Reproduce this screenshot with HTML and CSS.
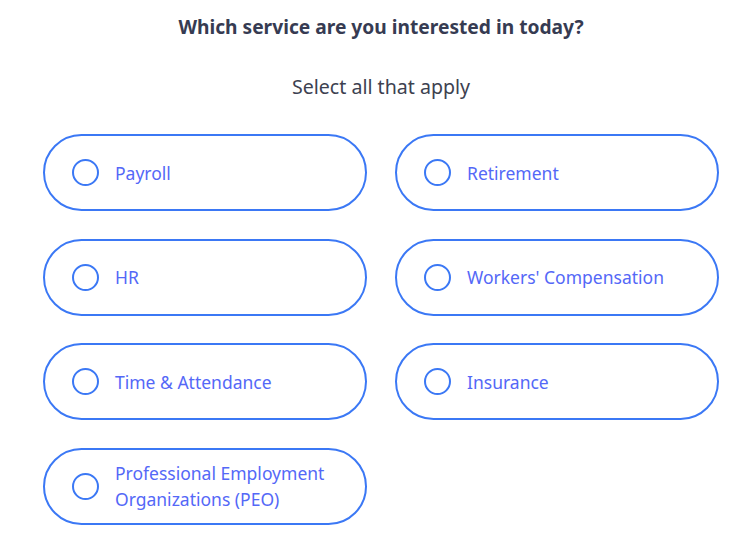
FILE: index.html
```html
<!DOCTYPE html>
<html lang="en">

<head>
    <meta charset="UTF-8" />
    <title>Which service are you interested in today?</title>
    <link rel="stylesheet" href="styles.css">
</head>

<body>
    <div class="survey">
        <h2 class="question">Which service are you interested in today?</h2>
        <p class="hint">Select all that apply</p>

        <div class="options">
            <label class="option"><span class="radio"></span><span class="label">Payroll</span></label>
            <label class="option"><span class="radio"></span><span class="label">Retirement</span></label>
            <label class="option"><span class="radio"></span><span class="label">HR</span></label>
            <label class="option"><span class="radio"></span><span class="label">Workers' Compensation</span></label>
            <label class="option"><span class="radio"></span><span class="label">Time &amp; Attendance</span></label>
            <label class="option"><span class="radio"></span><span class="label">Insurance</span></label>
            <label class="option"><span class="radio"></span><span class="label">Professional Employment Organizations (PEO)</span></label>
        </div>
    </div>
</body>

</html>
```

FILE: styles.css
```css
body {
    margin: 0;
    background: #fff;
    font-family: "Noto Sans", Arial, sans-serif;
}

.survey {
    width: 676px;
    padding: 0 0 0 43px;
}

.question {
    margin: 0;
    padding-top: 13px;
    text-align: center;
    font-size: 19.2px;
    font-weight: bold;
    line-height: 28px;
    color: #363b52;
}

.hint {
    margin: 32px 0 0 0;
    text-align: center;
    font-size: 19.6px;
    line-height: 28px;
    color: #3d4150;
}

.options {
    margin-top: 33px;
    display: grid;
    grid-template-columns: 1fr 1fr;
    column-gap: 28px;
    row-gap: 27.5px;
}

.option {
    height: 77px;
    box-sizing: border-box;
    border: 2.5px solid #3b78f5;
    border-radius: 39px;
    display: flex;
    align-items: center;
    padding-left: 27px;
    cursor: pointer;
}

.radio {
    width: 27px;
    height: 27px;
    box-sizing: border-box;
    border: 2.5px solid #3b78f5;
    border-radius: 50%;
    flex-shrink: 0;
}

.label {
    margin-left: 16px;
    font-size: 17.5px;
    line-height: 26px;
    color: #5468f7;
}
```
